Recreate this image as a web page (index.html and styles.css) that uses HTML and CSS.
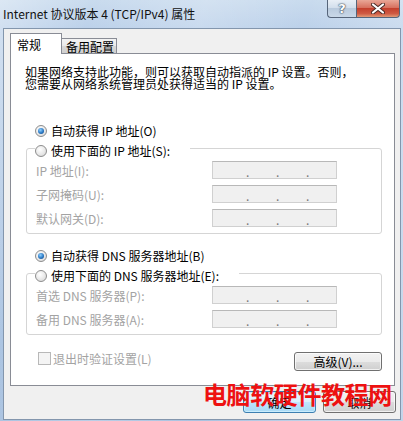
FILE: index.html
```html
<!DOCTYPE html>
<html lang="zh-CN">

<head>
    <meta charset="UTF-8">
    <title>Internet 协议版本 4 (TCP/IPv4) 属性</title>
    <link rel="stylesheet" href="styles.css">
</head>

<body>

    <div class="window">
        <div class="titlebar">
            <span class="title">Internet 协议版本 4 (TCP/IPv4) 属性</span>
            <div class="caption-buttons">
                <span class="cap-btn help">?</span>
                <span class="cap-btn close">
                    <svg width="14" height="11" viewBox="0 0 14 11">
                        <path d="M2 1.5 L12 9.5 M12 1.5 L2 9.5" stroke="#4a2a25" stroke-width="4" stroke-linecap="round" />
                        <path d="M2 1.5 L12 9.5 M12 1.5 L2 9.5" stroke="#ffffff" stroke-width="2.2" stroke-linecap="round" />
                    </svg>
                </span>
            </div>
        </div>

        <div class="client">
            <div class="tabs">
                <span class="tab active">常规</span>
                <span class="tab">备用配置</span>
            </div>

            <div class="panel">
                <p class="intro">如果网络支持此功能，则可以获取自动指派的 IP 设置。否则，<br>您需要从网络系统管理员处获得适当的 IP 设置。</p>

                <div class="option"><span class="radio checked"></span>自动获得 IP 地址(O)</div>
                <fieldset class="group">
                    <legend><span class="radio"></span>使用下面的 IP 地址(S):</legend>
                    <div class="fields">
                        <div class="field"><span class="label">IP 地址(I):</span><span class="ipbox"><i>.</i><i>.</i><i>.</i></span></div>
                        <div class="field"><span class="label">子网掩码(U):</span><span class="ipbox"><i>.</i><i>.</i><i>.</i></span></div>
                        <div class="field"><span class="label">默认网关(D):</span><span class="ipbox"><i>.</i><i>.</i><i>.</i></span></div>
                    </div>
                </fieldset>

                <div class="option second"><span class="radio checked"></span>自动获得 DNS 服务器地址(B)</div>
                <fieldset class="group">
                    <legend><span class="radio"></span>使用下面的 DNS 服务器地址(E):</legend>
                    <div class="fields">
                        <div class="field"><span class="label">首选 DNS 服务器(P):</span><span class="ipbox"><i>.</i><i>.</i><i>.</i></span></div>
                        <div class="field"><span class="label">备用 DNS 服务器(A):</span><span class="ipbox"><i>.</i><i>.</i><i>.</i></span></div>
                    </div>
                </fieldset>

                <div class="bottom-row">
                    <span class="check"><span class="box"></span>退出时验证设置(L)</span>
                    <span class="btn small">高级(V)...</span>
                </div>
            </div>

            <div class="footer">
                <span class="btn default">确定</span>
                <span class="btn">取消</span>
            </div>
        </div>

        <div class="watermark">电脑软硬件教程网</div>
    </div>

</body>

</html>
```

FILE: styles.css
```css
* {
    margin: 0;
    padding: 0;
    box-sizing: border-box;
}

body {
    font-family: "Noto Sans CJK SC", "Noto Sans", sans-serif;
    font-size: 12px;
    color: #000;
}

.window {
    position: relative;
    width: 403px;
    height: 421px;
    overflow: hidden;
    background:
        linear-gradient(105deg, rgba(255, 255, 255, 0.35) 0, rgba(255, 255, 255, 0) 18%, rgba(255, 255, 255, 0.2) 40%, rgba(255, 255, 255, 0) 60%, rgba(255, 255, 255, 0.3) 85%),
        linear-gradient(to bottom, #c9dbee 0, #bcd1ea 28px, #a9c2e0 100%);
}

.titlebar {
    display: flex;
    align-items: flex-start;
    height: 28px;
}

.title {
    padding-left: 3px;
    line-height: 28px;
    color: #111;
}

.caption-buttons {
    display: flex;
    margin-left: auto;
    margin-right: 3px;
}

.cap-btn {
    display: flex;
    align-items: center;
    justify-content: center;
    height: 18px;
    border: 1px solid #56657a;
    border-top: none;
}

.help {
    width: 29px;
    border-right: none;
    border-bottom-left-radius: 4px;
    background: linear-gradient(to bottom, #e9eff6 0, #d3dfec 45%, #b9cadd 50%, #c9d8e8 100%);
    color: #fff;
    font-family: "DejaVu Sans", sans-serif;
    font-weight: bold;
    font-size: 13px;
    line-height: 18px;
    text-shadow: 0 0 1px #3d4b5c, 0 0 1px #3d4b5c, 0 0 2px #3d4b5c;
}

.close {
    width: 44px;
    border-bottom-right-radius: 4px;
    background: linear-gradient(to bottom, #e9a797 0, #d7715f 45%, #c4402d 50%, #cf5a43 80%, #e29a76 100%);
}

.client {
    height: 392px;
    margin: 0 2px 0 3px;
    border: 1px solid #8396ad;
    background: #f0f0f0;
}

.tabs {
    display: flex;
    align-items: flex-end;
    height: 24px;
    margin-left: 6px;
}

.tab {
    height: 15px;
    width: 56px;
    margin-left: -1px;
    padding: 1px 0 0 4px;
    line-height: 13px;
    border: 1px solid #898c95;
    border-bottom: none;
    background: linear-gradient(to bottom, #f3f3f3 0, #e9e9e9 50%, #d9d9d9 51%, #cfcfcf 100%);
}

.tab.active {
    position: relative;
    z-index: 1;
    width: 52px;
    height: 21px;
    margin-left: 0;
    margin-bottom: -1px;
    padding: 4px 0 0 6px;
    line-height: 14px;
    background: #fff;
}

.panel {
    height: 333px;
    margin: 0 5px 0 6px;
    border: 1px solid #898c95;
    background: #fff;
}

.intro {
    margin: 12px 0 0 14px;
    line-height: 12px;
}

.option {
    display: flex;
    align-items: center;
    height: 14px;
    margin: 34px 0 0 24px;
    line-height: 14px;
}

.option.second {
    margin-top: 15px;
}

.radio {
    display: flex;
    align-items: center;
    justify-content: center;
    width: 12px;
    height: 12px;
    margin-right: 4px;
    border: 1px solid #8d8d8d;
    border-radius: 50%;
    background: radial-gradient(circle at 40% 35%, #ffffff 0, #e6e6e6 60%, #cfcfcf 100%);
}

.radio.checked::after {
    content: "";
    width: 6px;
    height: 6px;
    border-radius: 50%;
    background: radial-gradient(circle at 40% 35%, #8fd0ff 0, #2a78c4 55%, #0d3f78 100%);
}

.group {
    min-inline-size: 0;
    margin: 0 12px 0 15px;
    padding: 0;
    border: 1px solid #d5d5d5;
    border-radius: 3px;
}

.group legend {
    display: flex;
    align-items: center;
    height: 20px;
    margin-left: 8px;
    padding: 6px 20px 0 0;
    line-height: 14px;
}

.fields {
    display: flex;
    flex-direction: column;
    gap: 6px;
    padding: 3px 0 6px 9px;
}

.field {
    display: grid;
    grid-template-columns: 176px 125px;
    align-items: center;
    height: 18px;
}

.label {
    color: #a3a3a3;
}

.ipbox {
    display: flex;
    height: 18px;
    padding: 5px 0 0 33px;
    border: 1px solid #d0d0d0;
    border-top-color: #b8b8b8;
    background: #f0f0f0;
}

.ipbox i {
    width: 31px;
    font-style: normal;
    line-height: 10px;
    color: #777;
}

.bottom-row {
    display: flex;
    justify-content: space-between;
    align-items: flex-start;
    margin: 17px 12px 0 27px;
}

.check {
    display: flex;
    align-items: center;
    height: 13px;
    line-height: 13px;
    color: #a3a3a3;
}

.check .box {
    width: 13px;
    height: 13px;
    margin-right: 2px;
    border: 1px solid #b8b8b8;
    background: #f4f4f4;
}

.btn {
    display: flex;
    align-items: center;
    justify-content: center;
    width: 73px;
    height: 22px;
    border: 1px solid #707070;
    border-radius: 3px;
    background: linear-gradient(to bottom, #f2f2f2 0, #ebebeb 50%, #dddddd 51%, #cfcfcf 100%);
    box-shadow: inset 0 0 0 1px rgba(255, 255, 255, 0.7);
}

.btn.small {
    width: 88px;
    height: 19px;
}

.btn.default {
    border-color: #3c7fb1;
    background: linear-gradient(to bottom, #eaf6fd 0, #d9f0fc 50%, #bee6fd 51%, #a7d9f5 100%);
    box-shadow: inset 0 0 0 1px #c8ecfd;
}

.footer {
    display: flex;
    justify-content: flex-end;
    gap: 7px;
    margin: 5px 4px 0 0;
}

.watermark {
    position: absolute;
    left: 203px;
    top: 382px;
    font-size: 24px;
    font-weight: bold;
    line-height: 24px;
    letter-spacing: -0.4px;
    color: #ee1111;
}
```
